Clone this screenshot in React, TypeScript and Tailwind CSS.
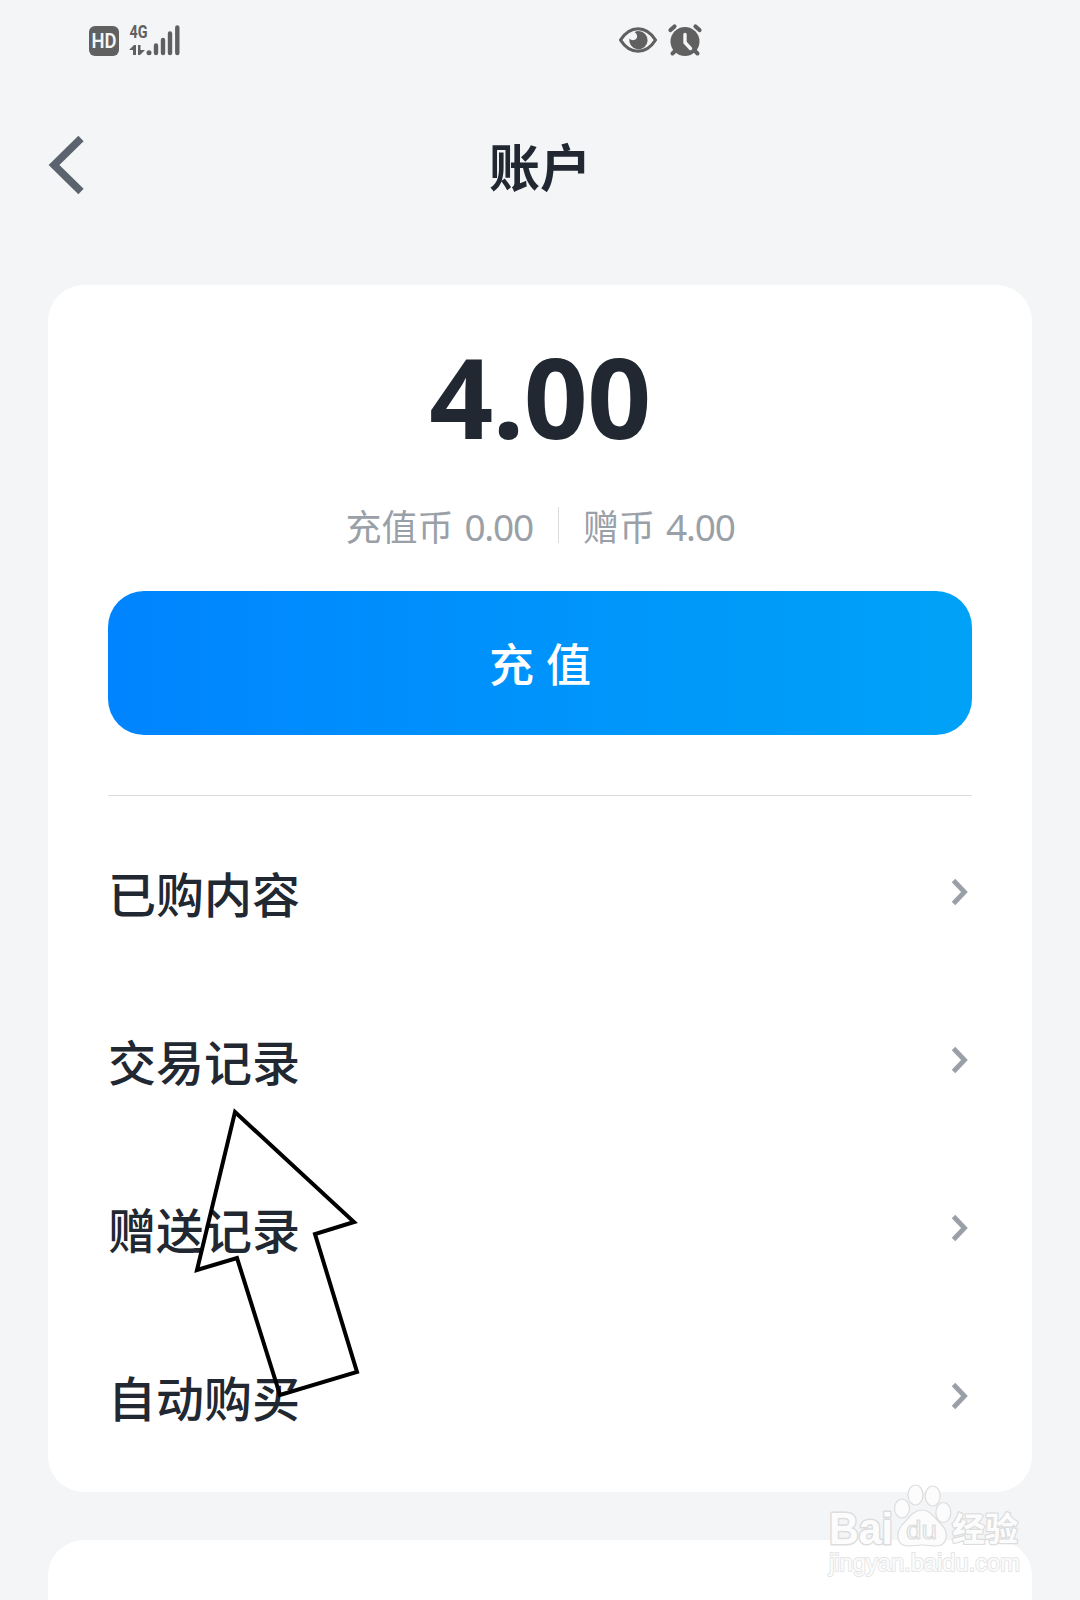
const rows = ['已购内容', '交易记录', '赠送记录', '自动购买'];

function StatusBar() {
  return (
    <header className="flex h-20 items-center pl-[84px] text-[#606060]">
      <svg width="104" height="48" viewBox="0 0 104 48" fill="currentColor">
        <rect x="5" y="10" width="30" height="30" rx="6" />
        <text x="7.5" y="32" fontSize="20" fontWeight="600" textLength="25" lengthAdjust="spacingAndGlyphs" fill="#f3f5f7" className="font-['Roboto',sans-serif]">HD</text>
        <text x="45.5" y="22" fontSize="19" fontWeight="700" textLength="18" lengthAdjust="spacingAndGlyphs" className="font-['Roboto',sans-serif]">4G</text>
        <path d="M45 34 50 29H52V39H49V34ZM54 29H56.500V34H61L56 39H54Z" />
        <circle cx="65" cy="36.800" r="2.500" />
        <g stroke="currentColor" strokeWidth="4.400" strokeLinecap="round">
          <path d="M72 29.500V37M79 24V37M86 17.500V37M93.300 11.500V37" />
        </g>
      </svg>
      <svg className="ml-[424px]" width="96" height="48" viewBox="0 0 96 48" fill="none" stroke="currentColor">
        <path d="M8.500 24C18 9 34 9 43.500 24C34 39 18 39 8.500 24Z" strokeWidth="3.200" strokeLinejoin="round" />
        <path d="M26.500 15A9.200 9.200 0 1 1 17.400 22.500C20.500 26 26 23.500 25 19.500C24.700 17.800 23.800 16.700 22.500 16.200C23.700 15.400 25 15 26.500 15Z" fill="currentColor" stroke="none" />
        <circle cx="73" cy="25.500" r="14.500" fill="currentColor" stroke="none" />
        <path d="M58.500 14 62.500 10.500M83.500 10.500 87.500 14" strokeWidth="4.200" strokeLinecap="round" />
        <path d="M64 34 60.500 37.500M82 34 85.500 37.500" strokeWidth="4" strokeLinecap="round" />
        <path d="M73 18.500V26.500L78.500 32.500" stroke="#f3f5f7" strokeWidth="3.400" strokeLinecap="round" />
      </svg>
    </header>
  );
}

function Watermark() {
  return (
    <svg className="absolute left-[810px] top-[1470px]" width="230" height="120" viewBox="810 1470 230 120" fill="#fcfcfc" stroke="#dcddde" strokeWidth="1.200" strokeLinejoin="round">
      <text x="829" y="1544" fontSize="44" fontWeight="700" textLength="64" lengthAdjust="spacingAndGlyphs" strokeWidth="3" paintOrder="stroke" className="font-['Liberation_Sans',sans-serif]">Bai</text>
      <ellipse cx="902" cy="1508.500" rx="7.500" ry="9.500" />
      <ellipse cx="915.500" cy="1495" rx="7.500" ry="10" />
      <ellipse cx="932.700" cy="1496" rx="7.500" ry="10" />
      <ellipse cx="943.300" cy="1512.500" rx="7.500" ry="10" />
      <path d="M922 1510C931 1510 934 1518 941 1524C950 1533 947 1546 936 1546C930 1546 928 1545 922 1545C916 1545 914 1546 908 1546C897 1546 895 1534 902 1525C909 1518 913 1510 922 1510Z" />
      <text x="906" y="1539" fontSize="26" textLength="31" lengthAdjust="spacingAndGlyphs" className="font-['Liberation_Sans',sans-serif]">du</text>
      <text x="952" y="1541" fontSize="33" fontWeight="700" textLength="66" strokeWidth="2.500" paintOrder="stroke" className="font-['Noto_Sans_CJK_SC',sans-serif]">经验</text>
      <text x="829" y="1571" fontSize="23" textLength="191" lengthAdjust="spacingAndGlyphs" strokeWidth="1.800" paintOrder="stroke" stroke="#e4e5e6" className="font-['Liberation_Sans',sans-serif]">jingyan.baidu.com</text>
    </svg>
  );
}

export default function App() {
  return (
    <div className="relative h-[1600px] w-[1080px] overflow-hidden bg-[#f3f5f7] font-['Noto_Sans_CJK_SC',sans-serif] text-[#212832]">
      <StatusBar />

      <nav className="grid h-[205px] grid-cols-3 items-start px-12 pt-[52px]">
        <svg width="40" height="66" viewBox="0 0 40 66" fill="none" stroke="#5b636e" strokeWidth="7.500">
          <path d="M33 6.500 6 33 33 59.500" />
        </svg>
        <h1 className="text-center text-[51px] leading-[66px] font-bold">账户</h1>
      </nav>

      <main className="mx-12 flex flex-col gap-12">
        <section className="h-[1207px] rounded-[36px] bg-white px-[60px]">
          <div className="pt-[55px] text-center font-['Noto_Sans',sans-serif] text-[112px] leading-[112px] font-bold tracking-[-0.5px]">4.00</div>

          <div className="mt-[47px] flex h-[52px] items-center justify-center text-[36px] text-[#9aa0a8]">
            <span className="whitespace-nowrap">充值币</span>
            <span className="ml-[11px] pt-[3px] font-['Noto_Sans',sans-serif] text-[37px] tracking-[-1.2px]">0.00</span>
            <span className="mr-6 ml-[25px] h-9 w-px bg-[#d9dcdf]" />
            <span className="whitespace-nowrap">赠币</span>
            <span className="ml-[11px] pt-[3px] font-['Noto_Sans',sans-serif] text-[37px] tracking-[-1.2px]">4.00</span>
          </div>

          <button className="mt-10 flex h-36 w-full items-center justify-center gap-3 rounded-[36px] bg-linear-to-r from-[#0084ff] to-[#00a2f7] pb-px text-[45px] font-medium text-white">
            <span>充</span>
            <span>值</span>
          </button>

          <ul className="mt-[60px] border-t border-[#d9dcdf] pt-3">
            {rows.map((label) => (
              <li key={label} className="flex h-[168px] items-center justify-between text-[48px] font-medium">
                <span>{label}</span>
                <svg width="24" height="32" viewBox="0 0 24 32" fill="none" stroke="#9aa0a8" strokeWidth="4.800">
                  <path d="M5.500 4.500 16.500 16 5.500 27.500" />
                </svg>
              </li>
            ))}
          </ul>
        </section>

        <section className="h-40 rounded-[36px] bg-white" />
      </main>

      {/* pointer over the list */}
      <svg className="absolute left-[180px] top-[1090px]" width="200" height="320" viewBox="180 1090 200 320" fill="none" stroke="#000" strokeWidth="4">
        <path d="M235 1112 354 1222 315 1234 357 1372 280 1395 237 1258 197 1270Z" />
      </svg>
      <Watermark />
    </div>
  );
}
